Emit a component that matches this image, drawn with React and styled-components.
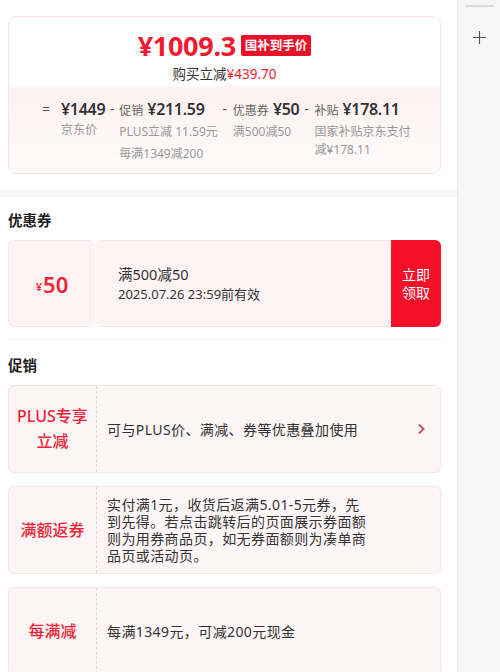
import React from 'react'
import styled, { createGlobalStyle } from 'styled-components'

const GlobalStyle = createGlobalStyle`
  body {
    margin: 0;
    font-family: "Noto Sans", "Noto Sans CJK SC", sans-serif;
    color: #333;
  }
`;

const Page = styled.div`
  display: flex;
  width: 500px;
  height: 672px;
  overflow: hidden;
  background: #fff;
`;

const Main = styled.div`
  width: 457px;
  padding-top: 16px;
  box-sizing: border-box;
`;

const Sidebar = styled.div`
  flex: 1;
  background: #f6f6f6;
  border-left: 1px solid #ececec;
  display: flex;
  flex-direction: column;
  align-items: center;
  padding-top: 5px;
`;

const SideLine = styled.div`
  width: 29px;
  height: 2px;
  background: #dcdcdc;
  border-radius: 1px;
`;

const PriceCard = styled.div`
  margin: 0 16px 0 8px;
  border: 1px solid #f4e4e6;
  border-radius: 8px;
  overflow: hidden;
`;

const PriceTop = styled.div`
  height: 70px;
  display: flex;
  flex-direction: column;
  align-items: center;
  padding-top: 13px;
  box-sizing: border-box;
  position: relative;

  &::after {
    content: '';
    position: absolute;
    left: 215px;
    bottom: 0;
    border: 5px solid transparent;
    border-bottom-color: #fdf1f1;
  }
`;

const PriceRow = styled.div`
  display: flex;
  align-items: center;
  gap: 5px;
  height: 30px;
`;

const BigPrice = styled.span`
  color: #ef1b2e;
  font-size: 27px;
  font-weight: 700;
  letter-spacing: -0.3px;
`;

const Badge = styled.span`
  background: #e8112a;
  color: #fff;
  font-size: 12.5px;
  font-weight: 700;
  padding: 0 4px;
  height: 21px;
  line-height: 21px;
  border-radius: 2px;
`;

const SaveLine = styled.div`
  font-size: 13.5px;
  color: #333;
  margin-top: 3px;

  b {
    color: #ef1b2e;
    font-weight: 400;
  }
`;

const PriceBottom = styled.div`
  background: linear-gradient(#fdf1f1, #fffafa);
  display: flex;
  gap: 2px;
  padding: 10px 0 10px 32px;
`;

const Item = styled.div`
  display: flex;
  align-items: flex-start;
`;

const Sign = styled.span`
  width: 10px;
  text-align: center;
  margin-right: ${p => p.$space}px;
  font-size: 14px;
  line-height: 24px;
  color: #555;
`;

const ItemBody = styled.div`
  display: flex;
  flex-direction: column;
  max-width: ${p => p.$max || 200}px;
`;

const Amount = styled.div`
  line-height: 24px;
  white-space: nowrap;
  color: #333;
  font-size: 16px;
  font-weight: 600;
  letter-spacing: -0.3px;

  small {
    font-size: 12px;
    font-weight: 400;
    color: #666;
    margin-right: 4px;
    letter-spacing: 0;
  }
`;

const Desc = styled.div`
  font-size: 12px;
  line-height: 18px;
  color: #999;
  & + & {
    margin-top: 4px;
  }
`;

const Band = styled.div`
  height: 8px;
  background: #f7f7fa;
  margin-top: 15px;
`;

const Section = styled.div`
  padding: 0 16px 0 8px;
`;

const Title = styled.div`
  font-size: 14.5px;
  font-weight: 700;
  color: #222;
  line-height: 20px;
  padding: ${p => p.$pad};
`;

const Coupon = styled.div`
  display: flex;
  height: 87px;
`;

const CouponFace = styled.div`
  width: 87px;
  background: #fdf3f4;
  border: 1px solid #f6e6e8;
  border-right: none;
  border-radius: 6px 0 0 6px;
  display: flex;
  align-items: center;
  justify-content: center;
  color: #ec2438;
  font-size: 22px;
  font-weight: 600;
  box-sizing: border-box;

  small {
    font-size: 11px;
    margin-right: 1px;
    margin-top: 6px;
  }
`;

const CouponInfo = styled.div`
  flex: 1;
  background: #fdf3f4;
  border: 1px solid #f6e6e8;
  border-right: none;
  border-left: 1px solid #fff;
  display: flex;
  flex-direction: column;
  justify-content: center;
  padding-left: 22px;
  position: relative;
  box-sizing: border-box;

  &::before, &::after {
    content: '';
    position: absolute;
    left: -5px;
    width: 8px;
    height: 8px;
    border-radius: 50%;
    background: #fff;
  }
  &::before { top: -5px; }
  &::after { bottom: -5px; }
`;

const CouponName = styled.div`
  font-size: 14.5px;
  line-height: 20px;
  color: #333;
`;

const CouponDate = styled.div`
  font-size: 13px;
  line-height: 20px;
  color: #333;
`;

const TakeButton = styled.button`
  width: 50px;
  border: none;
  background: #f5102a;
  color: #fff;
  font-family: inherit;
  font-size: 14px;
  line-height: 18px;
  border-radius: 0 6px 6px 0;
  padding: 0;
`;

const Divider = styled.div`
  height: 1px;
  background: #f0f0f0;
  margin-top: 12px;
`;

const PromoList = styled.div`
  display: flex;
  flex-direction: column;
  gap: 13px;
`;

const Promo = styled.div`
  display: flex;
  height: 88px;
  background: #fdf5f6;
  border: 1px solid #f5e5e7;
  border-radius: 6px;
  box-sizing: border-box;
`;

const PromoLabel = styled.div`
  width: 87px;
  flex-shrink: 0;
  border-right: 1px dashed #ecd0d4;
  display: flex;
  align-items: center;
  justify-content: center;
  text-align: center;
  color: #ec2438;
  font-size: 16px;
  font-weight: 500;
  line-height: 25px;
`;

const PromoText = styled.div`
  flex: 1;
  display: flex;
  align-items: center;
  padding: 0 12px 0 10px;
  font-size: 14px;
  line-height: 17px;
  letter-spacing: 0.4px;
  color: #333;
`;

const Chevron = () => (
  <svg width="8" height="12" viewBox="0 0 8 12" style={{ marginLeft: 'auto', marginRight: 3 }}>
    <path d="M2 1.5l4.5 4.5L2 10.5" fill="none" stroke="#c4505e" strokeWidth="1.8" />
  </svg>
);

const Plus = () => (
  <svg width="13" height="13" viewBox="0 0 13 13" style={{ marginTop: 24 }}>
    <path d="M6.5 0v13M0 6.5h13" stroke="#555" strokeWidth="1.1" />
  </svg>
);

const breakdown = [
  { sign: '=', space: 10, prefix: '', amount: '¥1449', desc: ['京东价'] },
  { sign: '-', space: 2, prefix: '促销', amount: '¥211.59', desc: ['PLUS立减 11.59元', '每满1349减200'] },
  { sign: '-', space: 3, prefix: '优惠券', amount: '¥50', desc: ['满500减50'] },
  { sign: '-', space: 3, prefix: '补贴', amount: '¥178.11', desc: ['国家补贴京东支付减¥178.11'], max: 98 },
];

const App = () => {
  return (
    <Page>
      <GlobalStyle />
      <Main>
        <PriceCard>
          <PriceTop>
            <PriceRow>
              <BigPrice>¥1009.3</BigPrice>
              <Badge>国补到手价</Badge>
            </PriceRow>
            <SaveLine>购买立减<b>¥439.70</b></SaveLine>
          </PriceTop>
          <PriceBottom>
            {breakdown.map(el => (
              <Item key={el.amount}>
                <Sign $space={el.space}>{el.sign}</Sign>
                <ItemBody $max={el.max}>
                  <Amount>{el.prefix && <small>{el.prefix}</small>}{el.amount}</Amount>
                  {el.desc.map(d => <Desc key={d}>{d}</Desc>)}
                </ItemBody>
              </Item>
            ))}
          </PriceBottom>
        </PriceCard>

        <Band />

        <Section>
          <Title $pad="13px 0 10px">优惠券</Title>
          <Coupon>
            <CouponFace><small>¥</small>50</CouponFace>
            <CouponInfo>
              <CouponName>满500减50</CouponName>
              <CouponDate>2025.07.26 23:59前有效</CouponDate>
            </CouponInfo>
            <TakeButton>立即<br />领取</TakeButton>
          </Coupon>
          <Divider />

          <Title $pad="15px 0 10px">促销</Title>
          <PromoList>
            <Promo>
              <PromoLabel>PLUS专享<br />立减</PromoLabel>
              <PromoText>
                可与PLUS价、满减、券等优惠叠加使用
                <Chevron />
              </PromoText>
            </Promo>
            <Promo>
              <PromoLabel>满额返券</PromoLabel>
              <PromoText>
                实付满1元，收货后返满5.01-5元券，先<br />
                到先得。若点击跳转后的页面展示券面额<br />
                则为用券商品页，如无券面额则为凑单商<br />
                品页或活动页。
              </PromoText>
            </Promo>
            <Promo>
              <PromoLabel>每满减</PromoLabel>
              <PromoText>每满1349元，可减200元现金</PromoText>
            </Promo>
          </PromoList>
        </Section>
      </Main>
      <Sidebar>
        <SideLine />
        <Plus />
      </Sidebar>
    </Page>
  )
}

export default App
